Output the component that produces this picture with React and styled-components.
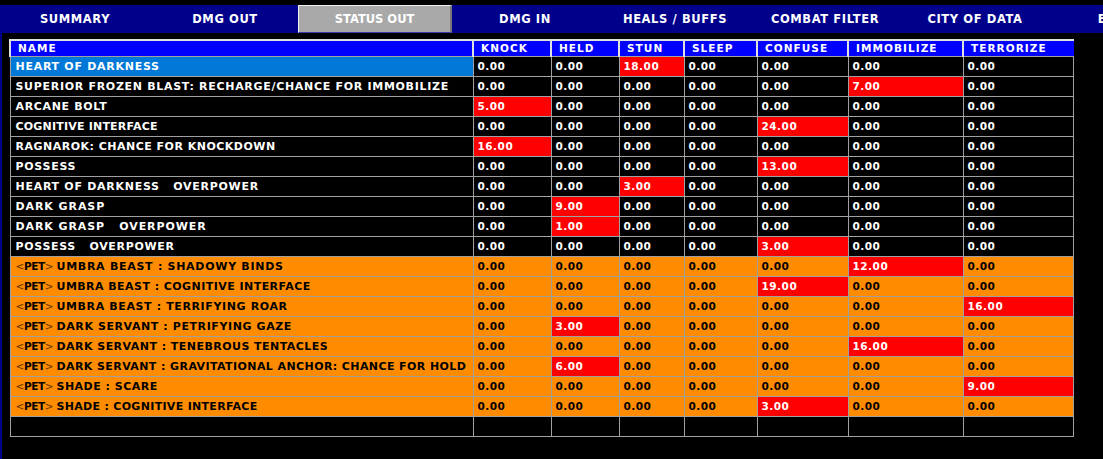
import React from 'react'
import styled, { createGlobalStyle } from 'styled-components'

const Global = createGlobalStyle`
html,body{margin:0;padding:0;background:#000;overflow:hidden;}
body{font-family:"DejaVu Sans",sans-serif;}
`
const Page = styled.div`
width:1103px;
height:459px;
padding-top:5px;
box-sizing:border-box;
display:flex;
flex-direction:column;
overflow:hidden;
background:#000;
`
const Nav = styled.div`
display:flex;
height:28px;
flex:none;
background:#00008b;
`
const Tab = styled.div`
flex:none;
width:150px;
box-sizing:border-box;
height:28px;
display:flex;
align-items:center;
justify-content:center;
color:#fff;
font-size:11.5px;
font-weight:700;
letter-spacing:${p=>p.$active?'0':'.6px'};
white-space:nowrap;
position:relative;
${p=>p.$active&&`
background:#a9a9a9;
border:1px solid #f0f0f0;
border-right:2px solid #777;
border-bottom:1px solid #3a3aa8;
width:154px;
margin:0 -2px;
z-index:1;
`}
`
const Main = styled.div`
flex:1;
border-left:2px solid #00008b;
padding:6px 0 0 7px;
`
const Table = styled.table`
border-collapse:collapse;
table-layout:fixed;
width:1064px;
color:#fff;
border-top:2px solid #e0e0e0;
border-left:1px solid #a0a0a0;
`
const Head = styled.th`
height:15px;
padding:0 0 0 7px;
background:#0000ff;
border-left:2px solid #e0e0e0;
border-right:1px solid #0000ff;
border-bottom:1px solid #a0a0a0;
font-size:10.5px;
font-weight:700;
letter-spacing:1.05px;
text-align:left;
line-height:15px;
white-space:nowrap;
overflow:hidden;
`
const Cell = styled.td`
height:19px;
padding:0 0 0 4px;
border:1px solid #a0a0a0;
background:${p=>p.$bg};
color:${p=>p.$fg};
font-size:10.5px;
font-weight:700;
letter-spacing:.5px;
line-height:19px;
white-space:nowrap;
overflow:hidden;
`
const NameCell = styled(Cell)`
padding-left:5px;
font-size:11px;
letter-spacing:${p=>p.$track}px;
`
const Prefix = styled.span`
display:inline-block;
width:41px;
font-size:10.5px;
letter-spacing:-.4px;
`
const Angle = styled.span`
font-weight:400;
color:#5a3000;
`

const tabs = ['SUMMARY','DMG OUT','STATUS OUT','DMG IN','HEALS / BUFFS','COMBAT FILTER','CITY OF DATA','EXPORT']
const cols = [
  ['NAME',463],['KNOCK',78],['HELD',68],['STUN',65],['SLEEP',73],['CONFUSE',91],['IMMOBILIZE',115],['TERRORIZE',110],
]
// name, index of the red column, value, letter spacing, pet row
const rows = [
  ['HEART OF DARKNESS',3,'18.00',.72],
  ['SUPERIOR FROZEN BLAST: RECHARGE/CHANCE FOR IMMOBILIZE',6,'7.00',.7],
  ['ARCANE BOLT',1,'5.00',.66],
  ['COGNITIVE INTERFACE',5,'24.00',.2],
  ['RAGNAROK: CHANCE FOR KNOCKDOWN',1,'16.00',.49],
  ['POSSESS',5,'13.00',.72],
  ['HEART OF DARKNESS \u00a0 OVERPOWER',3,'3.00',.72],
  ['DARK GRASP',2,'9.00',.92],
  ['DARK GRASP \u00a0 OVERPOWER',2,'1.00',.91],
  ['POSSESS \u00a0 OVERPOWER',5,'3.00',.68],
  ['UMBRA BEAST : SHADOWY BINDS',6,'12.00',.72,true],
  ['UMBRA BEAST : COGNITIVE INTERFACE',5,'19.00',.45,true],
  ['UMBRA BEAST : TERRIFYING ROAR',7,'16.00',.62,true],
  ['DARK SERVANT : PETRIFYING GAZE',2,'3.00',.59,true],
  ['DARK SERVANT : TENEBROUS TENTACLES',6,'16.00',.46,true],
  ['DARK SERVANT : GRAVITATIONAL ANCHOR: CHANCE FOR HOLD',2,'6.00',.41,true],
  ['SHADE : SCARE',7,'9.00',.49,true],
  ['SHADE : COGNITIVE INTERFACE',5,'3.00',.31,true],
]

export default function App(){
  return (
    <Page>
      <Global/>
      <Nav>
        {tabs.map((t,i)=><Tab key={t} $active={i===2}>{t}</Tab>)}
      </Nav>
      <Main>
        <Table>
          <colgroup>
            {cols.map(c=><col key={c[0]} width={c[1]}/>)}
          </colgroup>
          <thead>
            <tr>{cols.map(c=><Head key={c[0]}>{c[0]}</Head>)}</tr>
          </thead>
          <tbody>
            {rows.map((r,ri)=>{
              const bg = r[4]?'#ff8c00':'#000'
              const fg = r[4]?'#000':'#fff'
              return (
                <tr key={r[0]}>
                  <NameCell $track={r[3]} $bg={ri===0?'#0078d7':bg} $fg={fg}>
                    {r[4]&&<Prefix><Angle>&lt;</Angle>PET<Angle>&gt;</Angle></Prefix>}{r[0]}
                  </NameCell>
                  {cols.slice(1).map((c,i)=>{
                    const hit = r[1]===i+1
                    return <Cell key={c[0]} $bg={hit?'#ff0000':bg} $fg={hit?'#fff':fg}>{hit?r[2]:'0.00'}</Cell>
                  })}
                </tr>
              )
            })}
            <tr>{cols.map(c=><Cell key={c[0]} $bg="#000" $fg="#fff"/>)}</tr>
          </tbody>
        </Table>
      </Main>
    </Page>
  )
}
